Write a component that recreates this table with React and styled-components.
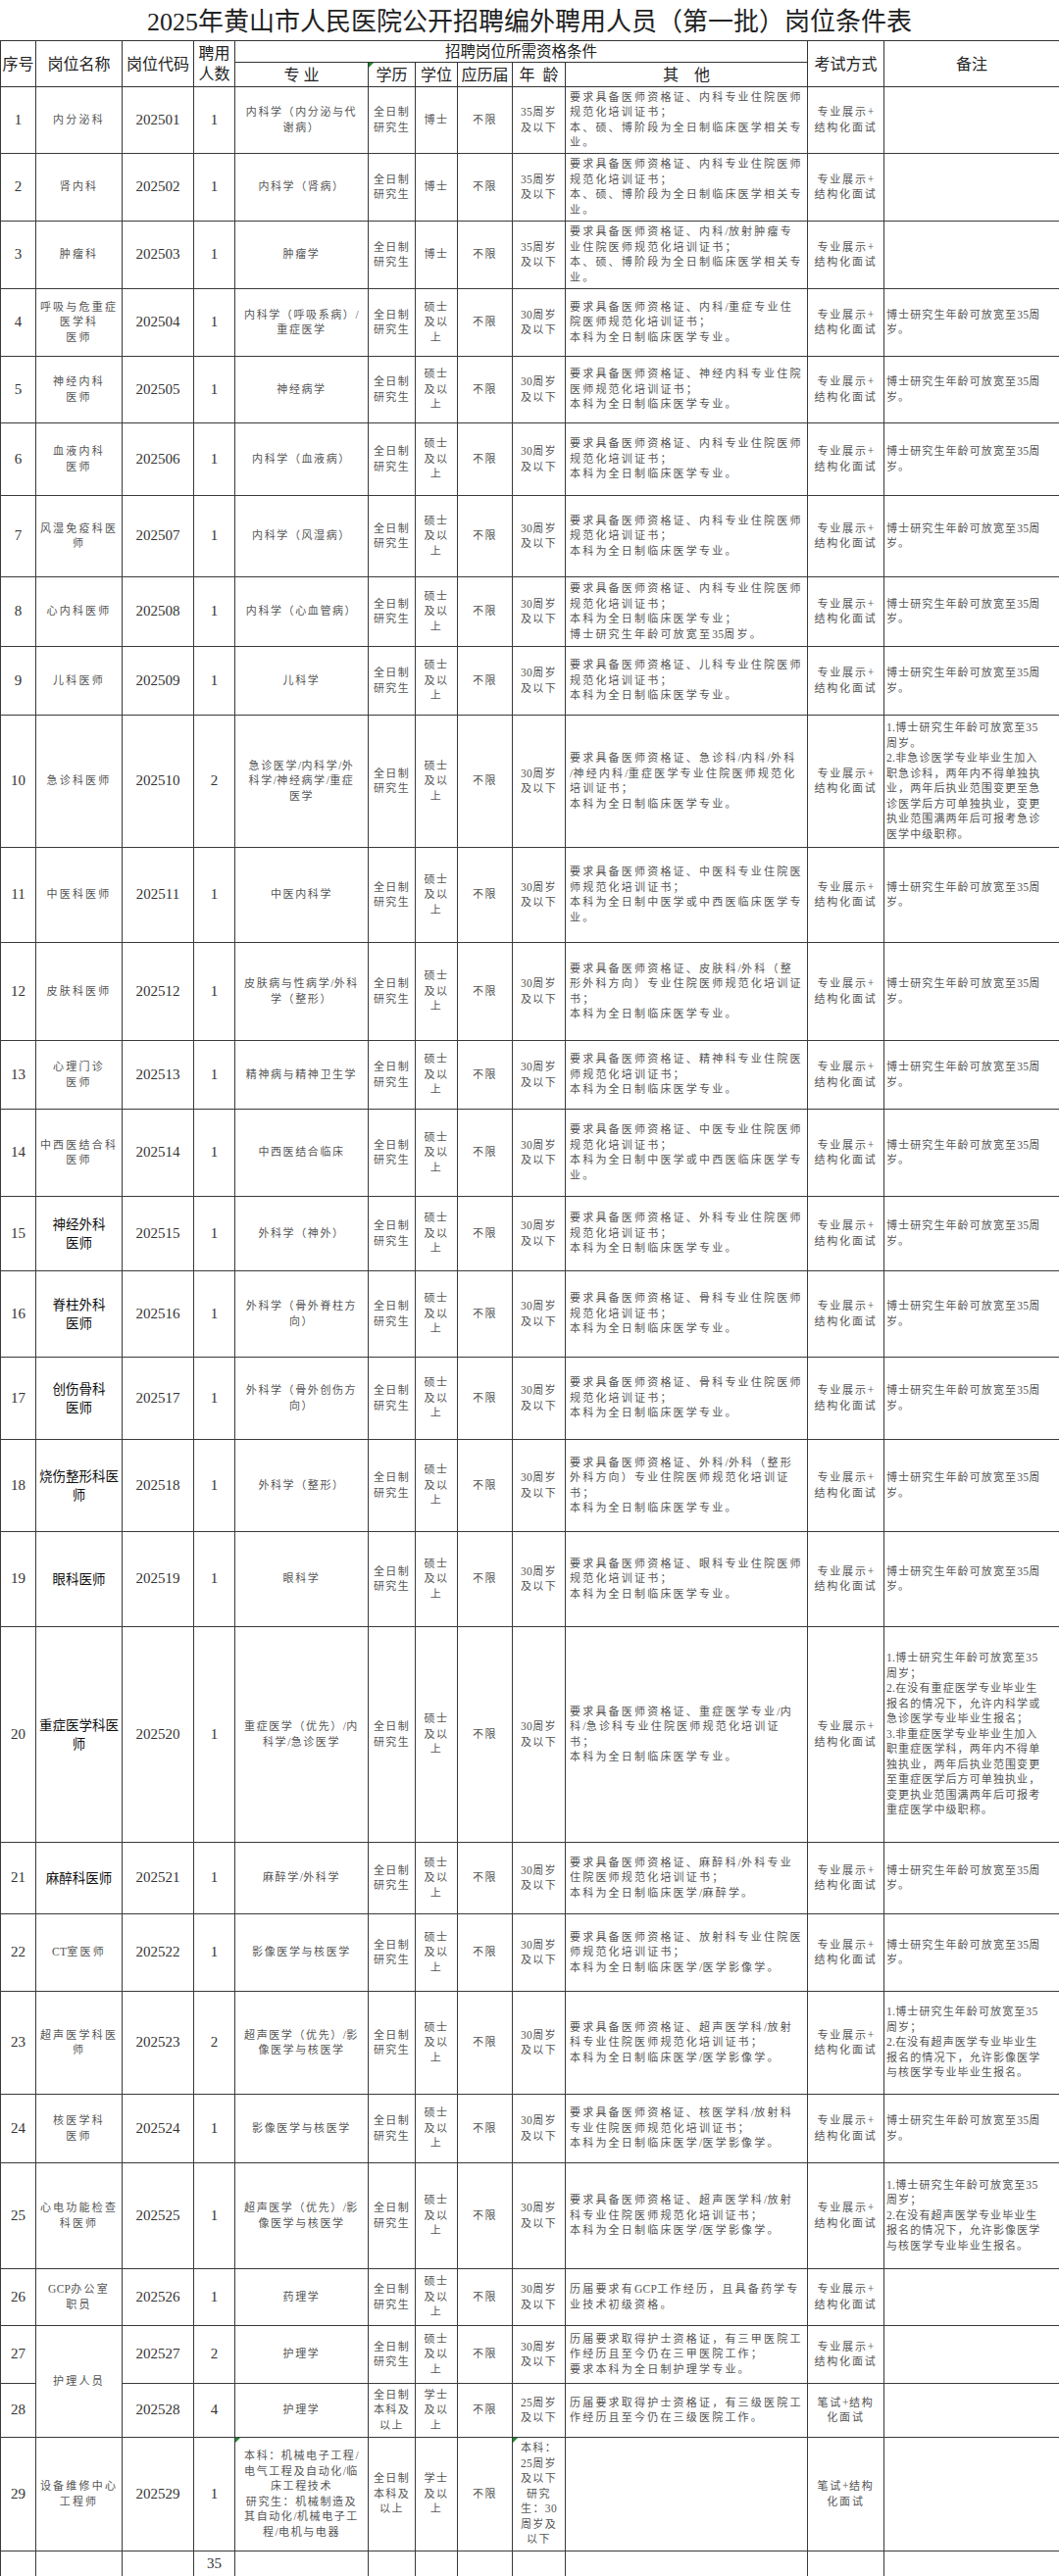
import React from "react";
import styled, { createGlobalStyle, css } from "styled-components";

const GlobalStyle = createGlobalStyle`
  html, body { margin: 0; padding: 0; background: #fff; }
  body { font-family: "Liberation Serif", "Noto Sans CJK SC", serif; color: #333; }
`;

const Page = styled.div`
  width: 1080px;
`;

const Title = styled.h1`
  margin: 0;
  height: 41px;
  line-height: 46px;
  text-align: center;
  font-weight: 400;
  font-size: 26px;
  color: #222;
  white-space: nowrap;
`;

const Table = styled.table`
  width: 1080px;
  border-collapse: collapse;
  table-layout: fixed;
`;

const Row = styled.tr`
  height: ${(p) => p.$h}px;
`;

const flagCss = css`
  &::before {
    content: "";
    position: absolute;
    left: 0;
    top: 0;
    border-style: solid;
    border-width: 5px 5px 0 0;
    border-color: #1e8a2c transparent transparent transparent;
  }
`;

const Head = styled.th`
  border: 1px solid #333;
  padding: 0;
  font-weight: 400;
  font-size: ${(p) => p.$size || 16}px;
  line-height: 21px;
  color: #222;
  text-align: center;
  vertical-align: middle;
  white-space: nowrap;
  position: relative;
  ${(p) => p.$flag && flagCss}
`;

const Cell = styled.td`
  border: 1px solid #3a3a3a;
  padding: ${(p) => (p.$left ? "0 0 0 " + p.$pad + "px" : "0 2px")};
  text-align: ${(p) => (p.$left ? "left" : "center")};
  vertical-align: middle;
  font-size: 11px;
  line-height: 15.5px;
  letter-spacing: ${(p) => p.$ls ?? 1.6}px;
  color: #555;
  white-space: nowrap;
  overflow: hidden;
  position: relative;
  ${(p) => p.$flag && flagCss}
`;

const NumCell = styled(Cell)`
  font-size: 15px;
  letter-spacing: 0;
  color: #333;
`;

const NameCell = styled(Cell)`
  ${(p) =>
    p.$big &&
    css`
      font-size: 13.5px;
      line-height: 19px;
      letter-spacing: 0;
      color: #111;
    `}
`;

const Line = styled.span`
  display: block;
`;

const Latin = styled.span`
  letter-spacing: 0.3px;
  font-size: 11.5px;
`;

const renderLine = (t) =>
  t.split(/([0-9A-Za-z.+/]+)/).map((part, i) =>
    i % 2 === 1 ? <Latin key={i}>{part}</Latin> : part
  );

const Lines = ({ text }) =>
  text ? text.split("|").map((t, i) => <Line key={i}>{renderLine(t)}</Line>) : null;

const DOC = "全日制|研究生";
const UG = "全日制|本科及|以上";
const MS = "硕士|及以|上";
const BS = "学士|及以|上";
const EXAM = "专业展示+|结构化面试";
const WRITE = "笔试+结构|化面试";
const A35 = "35周岁|及以下";
const A30 = "30周岁|及以下";
const NOTE = "博士研究生年龄可放宽至35周|岁。";
const NOTE10 =
  "1.博士研究生年龄可放宽至35|周岁。|2.非急诊医学专业毕业生加入|职急诊科，两年内不得单独执|业，两年后执业范围变更至急|诊医学后方可单独执业，变更|执业范围满两年后可报考急诊|医学中级职称。";
const NOTE20 =
  "1.博士研究生年龄可放宽至35|周岁；|2.在没有重症医学专业毕业生|报名的情况下，允许内科学或|急诊医学专业毕业生报名；|3.非重症医学专业毕业生加入|职重症医学科，两年内不得单|独执业，两年后执业范围变更|至重症医学后方可单独执业，|变更执业范围满两年后可报考|重症医学中级职称。";
const NOTE23 =
  "1.博士研究生年龄可放宽至35|周岁；|2.在没有超声医学专业毕业生|报名的情况下，允许影像医学|与核医学专业毕业生报名。";

const O_NK = "要求具备医师资格证、内科专业住院医师|规范化培训证书；|本、硕、博阶段为全日制临床医学相关专|业。";
const O_NK2 = "要求具备医师资格证、内科专业住院医师|规范化培训证书；|本科为全日制临床医学专业。";
const O_GK = "要求具备医师资格证、骨科专业住院医师|规范化培训证书；|本科为全日制临床医学专业。";
const O_CS = "要求具备医师资格证、超声医学科/放射|科专业住院医师规范化培训证书；|本科为全日制临床医学/医学影像学。";

const rows = [
  { no: 1, name: "内分泌科", n: 1, major: "内科学（内分泌与代|谢病）", deg: "博士", age: A35, other: O_NK, note: "", h: 68 },
  { no: 2, name: "肾内科", n: 1, major: "内科学（肾病）", deg: "博士", age: A35, other: O_NK, note: "", h: 69 },
  { no: 3, name: "肿瘤科", n: 1, major: "肿瘤学", deg: "博士", age: A35, other: "要求具备医师资格证、内科/放射肿瘤专|业住院医师规范化培训证书；|本、硕、博阶段为全日制临床医学相关专|业。", note: "", h: 69 },
  { no: 4, name: "呼吸与危重症|医学科|医师", n: 1, major: "内科学（呼吸系病）/|重症医学", other: "要求具备医师资格证、内科/重症专业住|院医师规范化培训证书；|本科为全日制临床医学专业。", h: 69 },
  { no: 5, name: "神经内科|医师", n: 1, major: "神经病学", other: "要求具备医师资格证、神经内科专业住院|医师规范化培训证书；|本科为全日制临床医学专业。", h: 68 },
  { no: 6, name: "血液内科|医师", n: 1, major: "内科学（血液病）", other: O_NK2, h: 74 },
  { no: 7, name: "风湿免疫科医|师", n: 1, major: "内科学（风湿病）", other: O_NK2, h: 83 },
  { no: 8, name: "心内科医师", n: 1, major: "内科学（心血管病）", other: "要求具备医师资格证、内科专业住院医师|规范化培训证书；|本科为全日制临床医学专业；|博士研究生年龄可放宽至35周岁。", h: 71 },
  { no: 9, name: "儿科医师", n: 1, major: "儿科学", other: "要求具备医师资格证、儿科专业住院医师|规范化培训证书；|本科为全日制临床医学专业。", h: 70 },
  { no: 10, name: "急诊科医师", n: 2, major: "急诊医学/内科学/外|科学/神经病学/重症|医学", other: "要求具备医师资格证、急诊科/内科/外科|/神经内科/重症医学专业住院医师规范化|培训证书；|本科为全日制临床医学专业。", note: NOTE10, h: 135 },
  { no: 11, name: "中医科医师", n: 1, major: "中医内科学", other: "要求具备医师资格证、中医科专业住院医|师规范化培训证书；|本科为全日制中医学或中西医临床医学专|业。", h: 97 },
  { no: 12, name: "皮肤科医师", n: 1, major: "皮肤病与性病学/外科|学（整形）", other: "要求具备医师资格证、皮肤科/外科（整|形外科方向）专业住院医师规范化培训证|书；|本科为全日制临床医学专业。", h: 100 },
  { no: 13, name: "心理门诊|医师", n: 1, major: "精神病与精神卫生学", other: "要求具备医师资格证、精神科专业住院医|师规范化培训证书；|本科为全日制临床医学专业。", h: 70 },
  { no: 14, name: "中西医结合科|医师", n: 1, major: "中西医结合临床", other: "要求具备医师资格证、中医专业住院医师|规范化培训证书；|本科为全日制中医学或中西医临床医学专|业。", h: 89 },
  { no: 15, name: "神经外科|医师", big: true, n: 1, major: "外科学（神外）", other: "要求具备医师资格证、外科专业住院医师|规范化培训证书；|本科为全日制临床医学专业。", h: 76 },
  { no: 16, name: "脊柱外科|医师", big: true, n: 1, major: "外科学（骨外脊柱方|向）", other: O_GK, h: 88 },
  { no: 17, name: "创伤骨科|医师", big: true, n: 1, major: "外科学（骨外创伤方|向）", other: O_GK, h: 84 },
  { no: 18, name: "烧伤整形科医|师", big: true, n: 1, major: "外科学（整形）", other: "要求具备医师资格证、外科/外科（整形|外科方向）专业住院医师规范化培训证|书；|本科为全日制临床医学专业。", h: 94 },
  { no: 19, name: "眼科医师", big: true, n: 1, major: "眼科学", other: "要求具备医师资格证、眼科专业住院医师|规范化培训证书；|本科为全日制临床医学专业。", h: 97 },
  { no: 20, name: "重症医学科医|师", big: true, n: 1, major: "重症医学（优先）/内|科学/急诊医学", other: "要求具备医师资格证、重症医学专业/内|科/急诊科专业住院医师规范化培训证|书；|本科为全日制临床医学专业。", note: NOTE20, h: 220 },
  { no: 21, name: "麻醉科医师", big: true, n: 1, major: "麻醉学/外科学", other: "要求具备医师资格证、麻醉科/外科专业|住院医师规范化培训证书；|本科为全日制临床医学/麻醉学。", h: 73 },
  { no: 22, name: "CT室医师", n: 1, major: "影像医学与核医学", other: "要求具备医师资格证、放射科专业住院医|师规范化培训证书；|本科为全日制临床医学/医学影像学。", h: 79 },
  { no: 23, name: "超声医学科医|师", n: 2, major: "超声医学（优先）/影|像医学与核医学", other: O_CS, note: NOTE23, h: 105 },
  { no: 24, name: "核医学科|医师", n: 1, major: "影像医学与核医学", other: "要求具备医师资格证、核医学科/放射科|专业住院医师规范化培训证书；|本科为全日制临床医学/医学影像学。", h: 70 },
  { no: 25, name: "心电功能检查|科医师", n: 1, major: "超声医学（优先）/影|像医学与核医学", other: O_CS, note: NOTE23, h: 108 },
  { no: 26, name: "GCP办公室|职员", n: 1, major: "药理学", other: "历届要求有GCP工作经历，且具备药学专|业技术初级资格。", note: "", h: 58 },
  { no: 27, name: "护理人员", span: 2, n: 2, major: "护理学", other: "历届要求取得护士资格证，有三甲医院工|作经历且至今仍在三甲医院工作；|要求本科为全日制护理学专业。", note: "", h: 59 },
  { no: 28, skipName: true, n: 4, major: "护理学", edu: UG, deg: BS, age: "25周岁|及以下", other: "历届要求取得护士资格证，有三级医院工|作经历且至今仍在三级医院工作。", exam: WRITE, note: "", h: 55 },
  {
    no: 29, name: "设备维修中心|工程师", n: 1,
    major: "本科：机械电子工程/|电气工程及自动化/临|床工程技术|研究生：机械制造及|其自动化/机械电子工|程/电机与电器",
    edu: UG, deg: BS, age: "本科：|25周岁|及以下|研究|生：30|周岁及|以下", other: "", exam: WRITE, note: "", h: 116, flags: true,
  },
];

const widths = [36, 88, 73, 42, 136, 48, 43, 56, 54, 247, 78, 179];

export default function App() {
  return (
    <Page>
      <GlobalStyle />
      <Title>2025年黄山市人民医院公开招聘编外聘用人员（第一批）岗位条件表</Title>
      <Table>
        <colgroup>
          {widths.map((w, i) => (
            <col key={i} style={{ width: w }} />
          ))}
        </colgroup>
        <thead>
          <Row $h={20}>
            <Head rowSpan={2}>序号</Head>
            <Head rowSpan={2}>岗位名称</Head>
            <Head rowSpan={2}>岗位代码</Head>
            <Head rowSpan={2}>
              <Line>聘用</Line>
              <Line>人数</Line>
            </Head>
            <Head colSpan={6} $size={15.5}>招聘岗位所需资格条件</Head>
            <Head rowSpan={2}>考试方式</Head>
            <Head rowSpan={2}>备注</Head>
          </Row>
          <Row $h={25}>
            <Head>专 业</Head>
            <Head $flag>学历</Head>
            <Head>学位</Head>
            <Head>应历届</Head>
            <Head>年{"\u2002"}龄</Head>
            <Head>其{"\u3000"}他</Head>
          </Row>
        </thead>
        <tbody>
          {rows.map((r) => (
            <Row key={r.no} $h={r.h}>
              <NumCell>{r.no}</NumCell>
              {!r.skipName && (
                <NameCell rowSpan={r.span || 1} $big={r.big} $ls={2.2}>
                  <Lines text={r.name} />
                </NameCell>
              )}
              <NumCell>{`2025${String(r.no).padStart(2, "0")}`}</NumCell>
              <NumCell>{r.n}</NumCell>
              <Cell $ls={1.6} $flag={r.flags}>
                <Lines text={r.major} />
              </Cell>
              <Cell $ls={1.4}>
                <Lines text={r.edu || DOC} />
              </Cell>
              <Cell $ls={1.4}>
                <Lines text={r.deg || MS} />
              </Cell>
              <Cell $ls={1.4}>不限</Cell>
              <Cell $ls={1.4} $flag={r.flags}>
                <Lines text={r.age || A30} />
              </Cell>
              <Cell $left $pad={4} $ls={2.2}>
                <Lines text={r.other} />
              </Cell>
              <Cell $ls={1.8}>
                <Lines text={r.exam || EXAM} />
              </Cell>
              <Cell $left $pad={2} $ls={1.1}>
                <Lines text={r.note ?? NOTE} />
              </Cell>
            </Row>
          ))}
          <Row $h={27}>
            <NumCell />
            <NumCell />
            <NumCell />
            <NumCell>35</NumCell>
            <Cell />
            <Cell />
            <Cell />
            <Cell />
            <Cell />
            <Cell />
            <Cell />
            <Cell />
          </Row>
        </tbody>
      </Table>
    </Page>
  );
}
